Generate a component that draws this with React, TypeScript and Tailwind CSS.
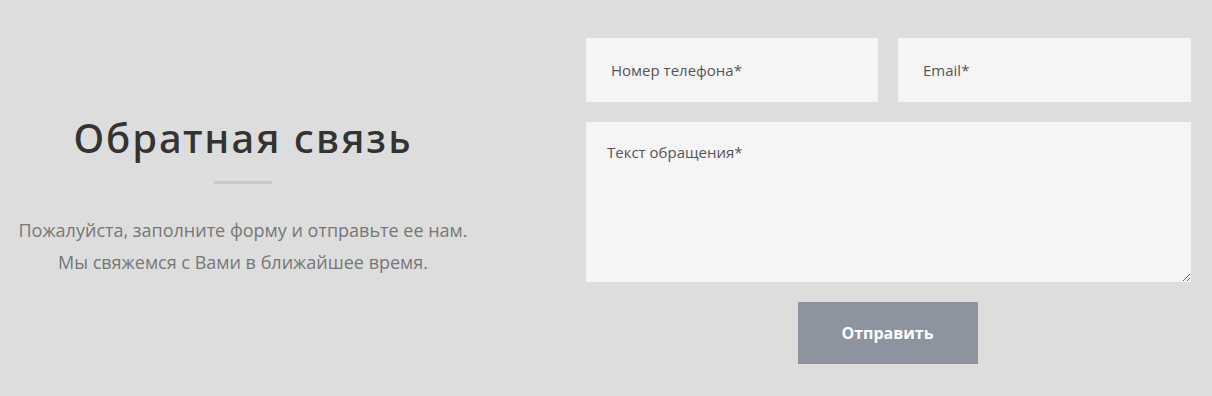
export default function App() {
  return (
    <div className="w-[1212px] h-[396px] bg-[#dddddd] flex" style={{ fontFamily: '"Open Sans", "Noto Sans", sans-serif' }}>
      {/* Левая колонка */}
      <div className="w-[486px] flex flex-col items-center pt-[112px]">
        <h2 className="text-[40px] leading-[52px] font-medium text-[#333333] tracking-[2px]" style={{ fontFamily: '"Noto Sans", sans-serif' }}>
          Обратная связь
        </h2>
        <div className="w-[58px] h-[3px] bg-[#c9c9c9] mt-[17px]" />
        <p className="mt-[30px] text-[18px] leading-[32px] text-[#777777] text-center">
          Пожалуйста, заполните форму и отправьте ее нам.
          <br />
          Мы свяжемся с Вами в ближайшее время.
        </p>
      </div>

      {/* Форма */}
      <form className="ml-[100px] w-[605px] pt-[38px] flex flex-col gap-[20px]">
        <div className="flex gap-[20px]">
          <input
            placeholder="Номер телефона*"
            className="w-[292px] h-[64px] bg-[#f5f5f5] px-[25px] text-[15px] text-[#555] placeholder:text-[#555] outline-none"
          />
          <input
            placeholder="Email*"
            className="w-[293px] h-[64px] bg-[#f5f5f5] px-[25px] text-[15px] text-[#555] placeholder:text-[#555] outline-none"
          />
        </div>
        <textarea
          placeholder="Текст обращения*"
          className="w-[605px] h-[160px] bg-[#f5f5f5] px-[21px] pt-[19px] text-[15px] text-[#555] placeholder:text-[#555] outline-none"
        />
        <div className="flex justify-center pr-[2px]">
          <button type="button" className="w-[180px] h-[62px] bg-[#8e93a0] text-white font-bold text-[16px]">
            Отправить
          </button>
        </div>
      </form>
    </div>
  );
}
